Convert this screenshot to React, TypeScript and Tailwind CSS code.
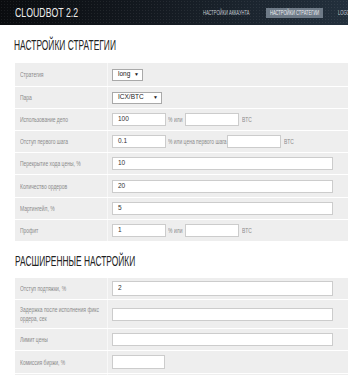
import React from "react";

const F = { fontFamily: '"Liberation Sans", Arial, sans-serif' };

function Lbl({ children }: { children: React.ReactNode }) {
  return (
    <span className="block w-max origin-left whitespace-nowrap scale-x-[0.62] text-[8px] leading-[9px] text-[#8a8a8a]">
      {children}
    </span>
  );
}

function Box({ w, value, className = "" }: { w: string; value?: string; className?: string }) {
  return (
    <div
      className={`${w} h-[13px] shrink-0 bg-white border border-[#cccccc] flex items-center pl-[5px] text-[6.5px] leading-none text-[#333] ${className}`}
    >
      {value}
    </div>
  );
}

function Sel({ w, value }: { w: string; value: string }) {
  return (
    <div className={`${w} h-[12px] shrink-0 bg-white border border-[#a9a9a9] flex items-center justify-between pl-[5px] pr-[3px] text-[6.5px] leading-none text-[#222]`}>
      <span>{value}</span>
      <span className="text-[5px] leading-none">▼</span>
    </div>
  );
}

function T({ w, children }: { w: string; children: React.ReactNode }) {
  return (
    <div className={`${w} shrink-0 overflow-visible leading-none`}>
      <Lbl>{children}</Lbl>
    </div>
  );
}

function Row({ label, h = "h-[21px]", children }: { label: React.ReactNode; h?: string; children: React.ReactNode }) {
  return (
    <div className={`flex ${h} bg-[#eeeeee] mb-px`}>
      <div className="w-[93px] shrink-0 pl-[5px] flex items-center border-r border-[#f8f8f8] leading-none">
        <Lbl>{label}</Lbl>
      </div>
      <div className="flex-1 pl-[4px] flex items-center leading-none">{children}</div>
    </div>
  );
}

export default function App() {
  return (
    <div className="w-[348px] h-[375px] overflow-hidden bg-white" style={F}>
      {/* Header */}
      <div className="h-[25px] flex items-center leading-none bg-[image:radial-gradient(rgba(255,255,255,0.07)_0.8px,transparent_0.9px),linear-gradient(90deg,#0a0c0f_0%,#141a21_45%,#23303d_100%)] bg-[size:3px_3px,100%_100%]">
        <div className="w-[203px] pl-[15px] shrink-0">
          <span className="block w-max origin-left whitespace-nowrap scale-x-[0.7] text-[12.5px] leading-[14px] text-[#eeeeee] mt-[1px]">
            CLOUDBOT 2.2
          </span>
        </div>
        <div className="w-[63px] shrink-0">
          <span className="block w-max origin-left whitespace-nowrap scale-x-[0.58] text-[7px] leading-[8px] text-[#c7ced6]">
            НАСТРОЙКИ АККАУНТА
          </span>
        </div>
        <div className="w-[57px] h-[10px] shrink-0 bg-[#6e7a87] flex items-center pl-[4px]">
          <span className="block w-max origin-left whitespace-nowrap scale-x-[0.58] text-[7px] leading-[8px] text-[#eef1f4]">
            НАСТРОЙКИ СТРАТЕГИИ
          </span>
        </div>
        <div className="ml-[15px] shrink-0">
          <span className="block w-max origin-left whitespace-nowrap scale-x-[0.58] text-[7px] leading-[8px] text-[#c7ced6]">
            LOGOUT
          </span>
        </div>
      </div>

      <div className="pl-[15px]">
        <div className="mt-[12px] mb-[11px] h-[15px] -ml-[1px] leading-none">
          <span className="block w-max origin-left whitespace-nowrap scale-x-[0.56] text-[15px] leading-[15px] text-[#222]">
            НАСТРОЙКИ СТРАТЕГИИ
          </span>
        </div>

        <div className="w-[345px]">
          <div className="h-[23px] flex bg-[#eeeeee] mb-px">
            <div className="w-[93px] shrink-0 pl-[5px] flex items-center border-r border-[#f8f8f8] leading-none">
              <Lbl>Стратегия</Lbl>
            </div>
            <div className="flex-1 pl-[4px] flex items-center">
              <Sel w="w-[31px]" value="long" />
            </div>
          </div>
          <Row label="Пара">
            <Sel w="w-[50px]" value="ICX/BTC" />
          </Row>
          <Row label="Использование депо">
            <Box w="w-[54px]" value="100" />
            <T w="w-[6px] ml-[2px]">%</T>
            <T w="w-[11px]">или</T>
            <Box w="w-[54px]" />
            <T w="w-[20px] ml-[3px]">BTC</T>
          </Row>
          <Row label="Отступ первого шага">
            <Box w="w-[54px]" value="0.1" />
            <T w="w-[59px] ml-[2px]">% или цена первого шага</T>
            <Box w="w-[54px]" />
            <T w="w-[20px] ml-[3px]">BTC</T>
          </Row>
          <Row label="Перекрытие хода цены, %">
            <Box w="w-[221px]" value="10" />
          </Row>
          <Row label="Количество ордеров" h="h-[22px]">
            <Box w="w-[221px]" value="20" />
          </Row>
          <Row label="Мартингейл, %">
            <Box w="w-[221px]" value="5" />
          </Row>
          <Row label="Профит">
            <Box w="w-[54px]" value="1" />
            <T w="w-[6px] ml-[2px]">%</T>
            <T w="w-[11px]">или</T>
            <Box w="w-[54px]" />
            <T w="w-[20px] ml-[3px]">BTC</T>
          </Row>
        </div>

        <div className="mt-[12px] mb-[10px] h-[15px] leading-none">
          <span className="block w-max origin-left whitespace-nowrap scale-x-[0.56] text-[15px] leading-[15px] text-[#222]">
            РАСШИРЕННЫЕ НАСТРОЙКИ
          </span>
        </div>

        <div className="w-[345px]">
          <Row label="Отступ подтяжки, %" h="h-[21px]">
            <Box w="w-[221px]" value="2" className="h-[15px]" />
          </Row>
          <Row
            h="h-[28px]"
            label={
              <>
                Задержка после исполнения фикс
                <br />
                ордера, сек
              </>
            }
          >
            <Box w="w-[221px]" />
          </Row>
          <Row label="Лимит цены">
            <Box w="w-[221px]" />
          </Row>
          <Row label="Комиссия биржи, %" h="h-[22px]">
            <Box w="w-[53px]" className="h-[14px]" />
          </Row>
          <Row label="">
            <span />
          </Row>
        </div>
      </div>
    </div>
  );
}
